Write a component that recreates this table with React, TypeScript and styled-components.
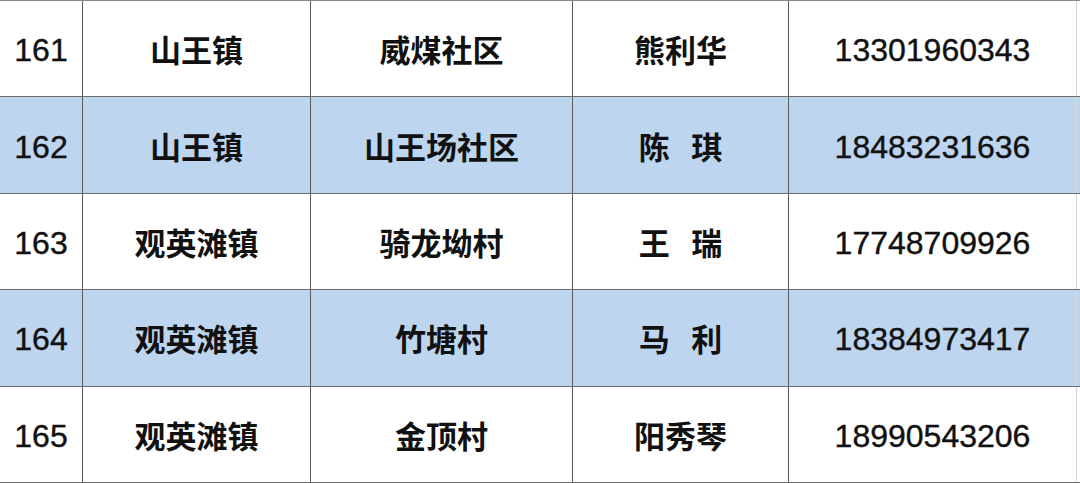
import React from "react";
import styled, { createGlobalStyle } from "styled-components";

const Global = createGlobalStyle`
  html, body { margin: 0; padding: 0; background: #fff; }
  body { width: 1080px; height: 483px; overflow: hidden; }
`;

const Table = styled.div`
  width: 1080px;
  height: 483px;
  display: grid;
  grid-template-rows: repeat(5, 1fr);
  box-sizing: border-box;
  border-top: 1px solid #8a8a8a;
`;

const Row = styled.div<{ $shaded: boolean }>`
  display: grid;
  grid-template-columns: 83px 228px 262px 216px 288px 1fr;
  background: ${(p) => (p.$shaded ? "#bdd5ee" : "#ffffff")};
  border-bottom: 1px solid #6b6b6b;
  min-height: 0;
`;

const Cell = styled.div<{ $num?: boolean; $last?: boolean }>`
  display: flex;
  align-items: center;
  justify-content: center;
  border-right: 1px solid ${(p) => (p.$last ? "#d6d6d6" : "#5a5a5a")};
  font-family: ${(p) =>
    p.$num
      ? `"Liberation Sans", Arial, sans-serif`
      : `"Noto Sans CJK SC", "Noto Sans", sans-serif`};
  font-weight: ${(p) => (p.$num ? 400 : 700)};
  font-size: ${(p) => (p.$num ? "32px" : "31px")};
  -webkit-text-stroke: ${(p) => (p.$num ? "0.4px #111" : "0")};
  color: #111;
  white-space: pre;
  padding-top: ${(p) => (p.$num ? "4px" : "0")};
`;

const Filler = styled.div``;

const rows = [
  ["161", "山王镇", "威煤社区", "熊利华", "13301960343"],
  ["162", "山王镇", "山王场社区", "陈\u2002\u2009琪", "18483231636"],
  ["163", "观英滩镇", "骑龙坳村", "王\u2002\u2009瑞", "17748709926"],
  ["164", "观英滩镇", "竹塘村", "马\u2002\u2009利", "18384973417"],
  ["165", "观英滩镇", "金顶村", "阳秀琴", "18990543206"],
];

export default function App() {
  return (
    <>
      <Global />
      <Table>
        {rows.map((r, i) => (
          <Row key={r[0]} $shaded={i % 2 === 1}>
            <Cell $num>{r[0]}</Cell>
            <Cell>{r[1]}</Cell>
            <Cell>{r[2]}</Cell>
            <Cell>{r[3]}</Cell>
            <Cell $num $last>{r[4]}</Cell>
            <Filler />
          </Row>
        ))}
      </Table>
    </>
  );
}
